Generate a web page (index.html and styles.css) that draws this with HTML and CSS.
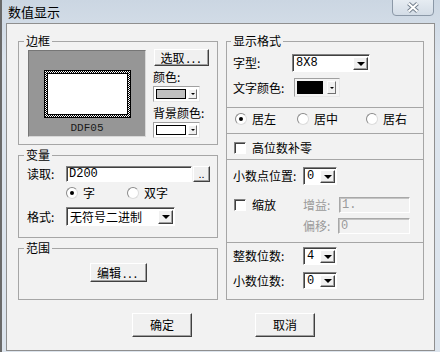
FILE: index.html
```html
<!DOCTYPE html>
<html lang="zh">
<head>
  <meta charset="UTF-8" />
  <title>数值显示</title>
  <link rel="stylesheet" href="styles.css">
</head>
<body>
  <div class="window">
    <div class="titlebar">
      <span class="title">数值显示</span>
      <span class="close">
        <svg width="14" height="11" viewBox="0 0 14 11">
          <path d="M2.5 1.5 L11.5 9.5 M11.5 1.5 L2.5 9.5" stroke="#74808e" stroke-width="4" fill="none" />
          <path d="M2.5 1.5 L11.5 9.5 M11.5 1.5 L2.5 9.5" stroke="#fff" stroke-width="2" fill="none" />
        </svg>
      </span>
    </div>

    <div class="client">
      <div class="groups">
        <div class="col-left">
          <fieldset class="group g-border">
            <legend>边框</legend>
            <div class="border-body">
              <div class="preview">
                <div class="frame"><div class="frame-in"></div></div>
                <div class="preview-name">DDF05</div>
              </div>
              <div class="side">
                <button class="btn btn-pick">选取<span class="dots">...</span></button>
                <div class="side-label">颜色:</div>
                <div class="picker"><span class="swatch sw-gray"></span><span class="picker-btn"><i class="tri-sm"></i></span></div>
                <div class="side-label">背景颜色:</div>
                <div class="picker"><span class="swatch sw-white"></span><span class="picker-btn"><i class="tri-sm"></i></span></div>
              </div>
            </div>
          </fieldset>

          <fieldset class="group g-var">
            <legend>变量</legend>
            <div class="var-row row-read">
              <span class="lbl">读取:</span>
              <span class="field f-read">D200</span>
              <button class="btn btn-more">..</button>
            </div>
            <div class="var-radios">
              <span class="opt opt-word"><i class="radio on"></i>字</span>
              <span class="opt"><i class="radio"></i>双字</span>
            </div>
            <div class="var-row row-fmt">
              <span class="lbl">格式:</span>
              <span class="combo c-fmt"><span class="combo-text cjk">无符号二进制</span><span class="combo-btn"><i class="tri"></i></span></span>
            </div>
          </fieldset>

          <fieldset class="group g-range">
            <legend>范围</legend>
            <button class="btn btn-edit">编辑<span class="dots">...</span></button>
          </fieldset>
        </div>

        <fieldset class="group g-format">
          <legend>显示格式</legend>

          <div class="sec sec-font">
            <div class="fmt-row row-type">
              <span class="lbl-w">字型:</span>
              <span class="combo c-type"><span class="combo-text">8X8</span><span class="combo-btn"><i class="tri"></i></span></span>
            </div>
            <div class="fmt-row row-color">
              <span class="lbl-w">文字颜色:</span>
              <div class="picker picker-text"><span class="swatch sw-black"></span><span class="picker-btn"><i class="tri-sm"></i></span></div>
            </div>
          </div>

          <div class="sec sec-align">
            <span class="opt"><i class="radio on"></i>居左</span>
            <span class="opt"><i class="radio"></i>居中</span>
            <span class="opt"><i class="radio"></i>居右</span>
          </div>

          <div class="sec sec-zero">
            <span class="opt"><i class="check"></i>高位数补零</span>
          </div>

          <div class="sec sec-dec">
            <div class="fmt-row row-point">
              <span class="lbl-n">小数点位置:</span>
              <span class="combo c-small"><span class="combo-text">0</span><span class="combo-btn"><i class="tri"></i></span></span>
            </div>
            <div class="fmt-row row-gain">
              <span class="lbl-n"><span class="opt opt-scale"><i class="check"></i>缩放</span></span>
              <span class="lbl-d">增益:</span>
              <span class="field disabled f-gain">1.</span>
            </div>
            <div class="fmt-row row-offset">
              <span class="lbl-n"></span>
              <span class="lbl-d lbl-off">偏移:</span>
              <span class="field disabled f-offset">0</span>
            </div>
          </div>

          <div class="sec sec-digits">
            <div class="fmt-row row-int">
              <span class="lbl-n">整数位数:</span>
              <span class="combo c-small"><span class="combo-text">4</span><span class="combo-btn"><i class="tri"></i></span></span>
            </div>
            <div class="fmt-row row-frac">
              <span class="lbl-n">小数位数:</span>
              <span class="combo c-small c-frac"><span class="combo-text">0</span><span class="combo-btn"><i class="tri"></i></span></span>
            </div>
          </div>
        </fieldset>
      </div>

      <div class="actions">
        <button class="btn btn-main">确定</button>
        <button class="btn btn-main">取消</button>
      </div>
    </div>
  </div>
</body>
</html>
```

FILE: styles.css
```css
html, body {
  margin: 0;
  padding: 0;
}

body {
  width: 440px;
  height: 352px;
  overflow: hidden;
  font-family: "Noto Sans CJK SC", sans-serif;
  font-size: 12px;
  color: #000;
}

.window {
  height: 352px;
  box-sizing: border-box;
  border-left: 2px solid #6a6a6a;
  display: flex;
  flex-direction: column;
  background: linear-gradient(#cbd6e2, #dce4ed 60px);
}

/* title bar */
.titlebar {
  height: 23px;
  display: flex;
  align-items: flex-start;
  flex-shrink: 0;
}

.title {
  padding: 4px 0 0 6px;
  font-size: 13px;
  line-height: 15px;
}

.close {
  margin: -1px 6px 0 auto;
  width: 42px;
  height: 17px;
  box-sizing: border-box;
  border: 1px solid #8b98a7;
  border-radius: 0 0 4px 4px;
  background: linear-gradient(#e6ecf2, #d3dce6);
  display: flex;
  align-items: center;
  justify-content: center;
}

/* client area */
.client {
  flex: 1;
  margin: 0 5px 1px 4px;
  border: 1px solid #8f8f8f;
  background: #f2f2f2;
  padding: 10px 10px 0 11px;
  display: flex;
  flex-direction: column;
}

.groups {
  display: grid;
  grid-template-columns: 200px 198px;
  column-gap: 8px;
  height: 266px;
}

.col-left {
  display: flex;
  flex-direction: column;
  gap: 3px;
}

.group {
  margin: 0;
  min-width: 0;
  box-sizing: border-box;
  border: 1px solid #a6a6a6;
  padding: 0 0 0 8px;
}

.group legend {
  padding: 0 2px;
  margin-left: -3px;
  line-height: 14px;
}

.g-border { height: 111px; }
.g-var { height: 90px; }
.g-range { height: 59px; }
.g-format { height: 266px; padding: 0; display: flex; flex-direction: column; }
.g-format legend { margin-left: 4px; }

/* buttons */
.btn {
  font: inherit;
  color: #000;
  margin: 0;
  padding: 0;
  box-sizing: border-box;
  background: #f0f0f0;
  border: 1px solid;
  border-color: #fff #404040 #404040 #fff;
  box-shadow: inset -1px -1px #a0a0a0;
  line-height: 14px;
}

.dots {
  letter-spacing: 2px;
  padding-left: 2px;
}

/* border group */
.border-body {
  display: flex;
  padding-top: 2px;
}

.preview {
  width: 118px;
  height: 87px;
  box-sizing: border-box;
  margin-left: 1px;
  background: #969696;
  border: 1px solid;
  border-color: #767676 #d8d8d8 #d8d8d8 #767676;
  display: flex;
  flex-direction: column;
  align-items: center;
  padding-top: 19px;
}

.frame {
  width: 87px;
  height: 48px;
  box-sizing: border-box;
  border: 1px solid #000;
  padding: 2px;
  background: repeating-conic-gradient(#000 0 25%, #fff 0 50%) 0 0 / 2px 2px;
}

.frame-in {
  height: 100%;
  box-sizing: border-box;
  border: 1px solid #000;
  background: #fff;
}

.preview-name {
  margin-top: 4px;
  font-family: "Liberation Mono", monospace;
  font-size: 11px;
  line-height: 12px;
  color: #1a1a1a;
}

.side {
  margin-left: 7px;
  display: flex;
  flex-direction: column;
  align-items: flex-start;
}

.btn-pick {
  width: 55px;
  height: 17px;
  margin: -1px 0 0 1px;
}

.side-label {
  line-height: 14px;
  margin-top: 4px;
}

.picker {
  width: 47px;
  height: 16px;
  margin-top: 2px;
  box-sizing: border-box;
  display: flex;
  gap: 2px;
  padding: 2px;
  background: #fff;
  border: 1px solid;
  border-color: #a0a0a0 #e8e8e8 #e8e8e8 #a0a0a0;
}

.swatch {
  flex: 1;
  border: 1px solid #000;
}

.sw-gray { background: #c0c0c0; }
.sw-white { background: #fff; }
.sw-black { background: #000; }

.picker-btn {
  width: 9px;
  box-sizing: border-box;
  background: #f0f0f0;
  border: 1px solid;
  border-color: #fff #707070 #707070 #fff;
  display: flex;
  align-items: center;
  justify-content: center;
}

.tri-sm {
  border-left: 2px solid transparent;
  border-right: 2px solid transparent;
  border-top: 2px solid #000;
}

/* combo box */
.combo {
  display: flex;
  box-sizing: border-box;
  border: 1px solid;
  border-color: #828282 #fff #fff #828282;
  box-shadow: inset 1px 1px #404040;
  background: #fff;
  padding: 2px 1px 1px 2px;
}

.combo-text {
  flex: 1;
  padding-left: 1px;
  font-family: "Liberation Mono", monospace;
  font-size: 12px;
  line-height: 13px;
  white-space: nowrap;
}

.combo-text.cjk {
  font-family: "Noto Sans CJK SC", sans-serif;
  line-height: 14px;
}

.combo-btn {
  width: 15px;
  box-sizing: border-box;
  background: #f0f0f0;
  border: 1px solid;
  border-color: #fff #404040 #404040 #fff;
  box-shadow: inset -1px -1px #a0a0a0;
  display: flex;
  align-items: center;
  justify-content: center;
}

.tri {
  border-left: 4px solid transparent;
  border-right: 4px solid transparent;
  border-top: 4px solid #000;
}

/* text fields */
.field {
  box-sizing: border-box;
  height: 16px;
  border: 1px solid;
  border-color: #828282 #fff #fff #828282;
  box-shadow: inset 1px 1px #404040;
  background: #fff;
  padding: 1px 0 0 2px;
  font-family: "Liberation Mono", monospace;
  font-size: 12px;
  line-height: 13px;
}

.field.disabled {
  background: #f2f2f2;
  color: #9a9a9a;
  border-color: #a8a8a8 #fff #fff #a8a8a8;
  box-shadow: inset 1px 1px #c4c4c4;
}

/* radio and check */
.opt {
  display: inline-flex;
  align-items: center;
  gap: 5px;
  line-height: 14px;
}

.radio {
  width: 12px;
  height: 12px;
  box-sizing: border-box;
  border-radius: 50%;
  border: 1px solid;
  border-color: #8a8a8a #dcdcdc #dcdcdc #8a8a8a;
  background: #fff;
  display: inline-flex;
  align-items: center;
  justify-content: center;
}

.radio.on::after {
  content: "";
  width: 4px;
  height: 4px;
  border-radius: 50%;
  background: #000;
}

.check {
  width: 12px;
  height: 12px;
  box-sizing: border-box;
  border: 1px solid;
  border-color: #828282 #fff #fff #828282;
  box-shadow: inset 1px 1px #404040;
  background: #fff;
}

/* variable group */
.var-row {
  display: flex;
  align-items: center;
}

.lbl {
  width: 39px;
  line-height: 14px;
}

.row-read {
  margin-top: 4px;
  height: 16px;
}

.f-read { width: 126px; }

.btn-more {
  width: 17px;
  height: 16px;
  margin-left: 1px;
  font-family: "Liberation Sans", sans-serif;
  font-size: 11px;
}

.var-radios {
  display: flex;
  margin-top: 4px;
  padding-left: 39px;
  height: 14px;
}

.opt-word { width: 61px; }

.row-fmt {
  margin-top: 7px;
  height: 19px;
}

.c-fmt {
  width: 109px;
  height: 19px;
}

/* range group */
.g-range {
  padding: 0;
  display: flex;
  flex-direction: column;
  align-items: center;
}

.g-range legend { margin-left: 5px; }

.btn-edit {
  width: 57px;
  height: 19px;
  margin-top: 8px;
}

/* format group */
.sec {
  box-sizing: border-box;
  border-top: 1px solid #a6a6a6;
}

.sec-font {
  border-top: 0;
  height: 59px;
  padding: 6px 0 0 6px;
}

.fmt-row {
  display: flex;
  align-items: center;
}

.lbl-w {
  width: 59px;
  line-height: 14px;
}

.row-type { height: 18px; }

.c-type {
  width: 78px;
  height: 18px;
}

.row-color {
  height: 19px;
  margin-top: 6px;
}

.picker-text {
  width: 46px;
  height: 19px;
  margin: 0 0 0 2px;
  background: #f4f4f4;
  padding: 2px 3px 2px 2px;
  gap: 4px;
}

.sec-align {
  height: 26px;
  padding: 4px 0 0 8px;
  display: grid;
  grid-template-columns: 62px 69px auto;
  align-content: start;
}

.sec-zero {
  height: 26px;
  padding: 6px 0 0 7px;
}

.sec-zero .opt { gap: 6px; }

.sec-dec {
  height: 83px;
  padding-left: 6px;
}

.lbl-n {
  width: 70px;
  line-height: 14px;
}

.c-small {
  width: 34px;
  height: 18px;
}

.row-point {
  margin-top: 7px;
  height: 18px;
}

.row-gain {
  margin-top: 12px;
  height: 16px;
}

.opt-scale {
  margin-left: 1px;
  gap: 6px;
}

.lbl-d {
  width: 36px;
  color: #9a9a9a;
  line-height: 14px;
}

.f-gain { width: 71px; }

.row-offset {
  margin-top: 5px;
  height: 16px;
}

.lbl-off { width: 35px; }

.f-offset { width: 72px; }

.sec-digits {
  flex: 1;
  padding-left: 6px;
}

.row-int {
  margin-top: 4px;
  height: 18px;
}

.row-frac {
  margin-top: 7px;
  height: 17px;
}

.c-frac { height: 17px; }

/* bottom buttons */
.actions {
  display: flex;
  justify-content: center;
  gap: 63px;
  margin-top: 13px;
  padding-left: 5px;
}

.btn-main {
  width: 60px;
  height: 24px;
}
```
